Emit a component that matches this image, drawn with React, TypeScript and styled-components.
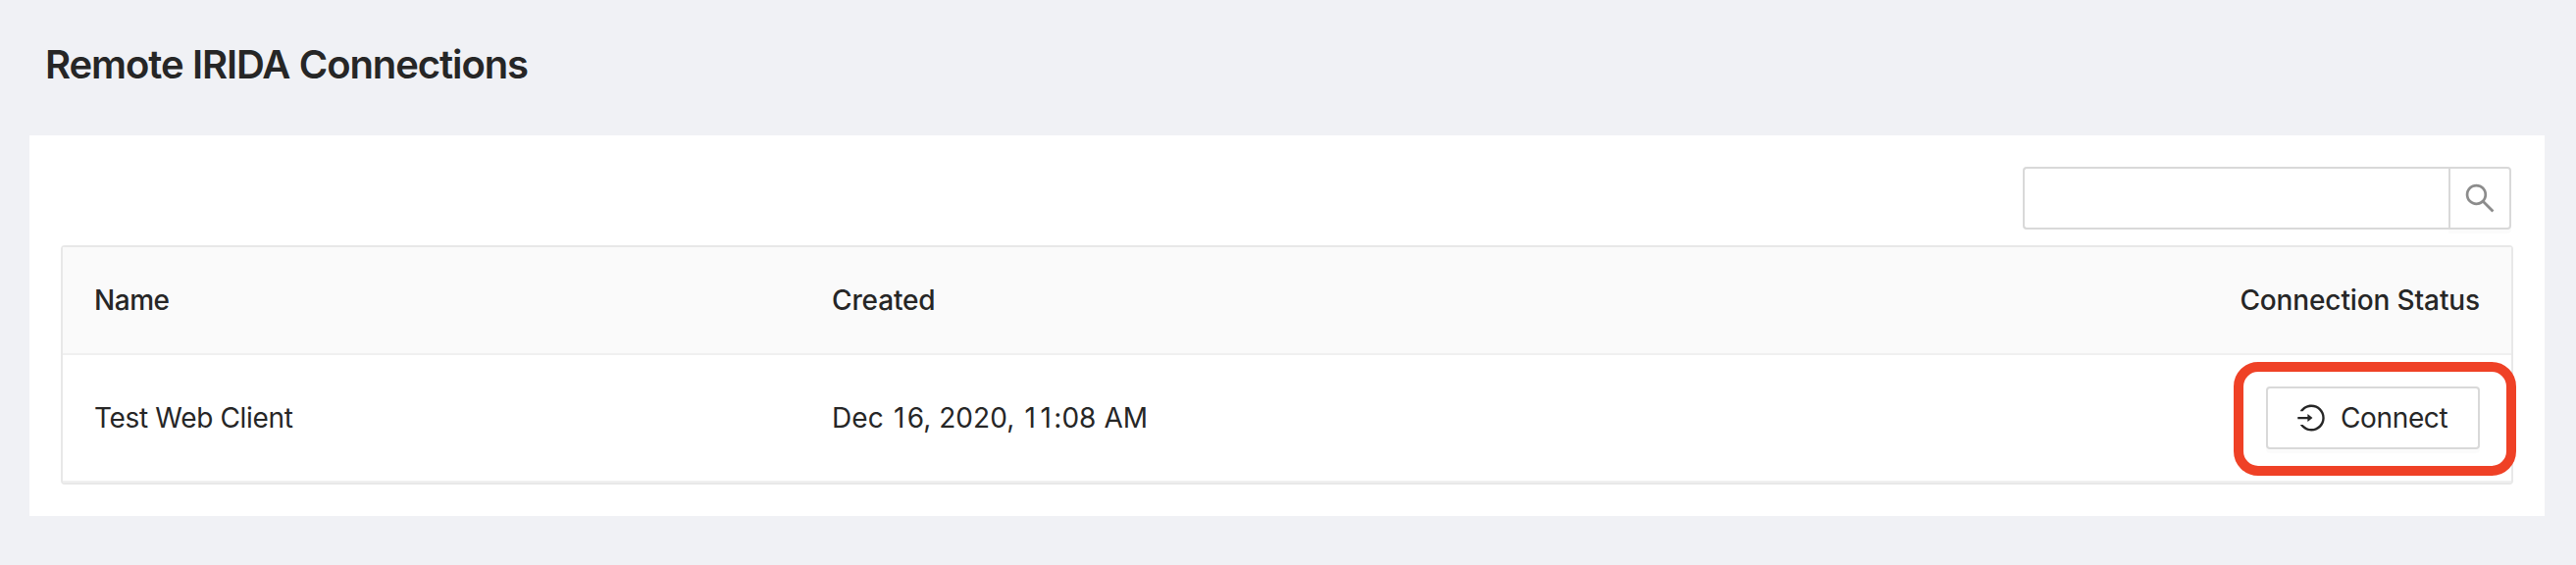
import React from 'react';
import { AiOutlineLogin, AiOutlineSearch } from 'react-icons/ai';
import styled, { createGlobalStyle } from 'styled-components';

const GlobalStyle = createGlobalStyle`
  *, *::before, *::after {
    box-sizing: border-box;
  }

  body {
    margin: 0;
    min-height: 100vh;
    background: #f0f1f5;
    color: #262626;
    font-family: Inter, 'Liberation Sans', sans-serif;
    font-size: 28px;
    line-height: 34px;
  }
`;

const Page = styled.main`
  display: flex;
  flex-direction: column;
  padding: 41px 32px 50px 30px;
`;

const PageTitle = styled.h1`
  margin: 0 0 48px 16px;
  font-size: 40px;
  font-weight: 600;
  line-height: 49px;
  letter-spacing: -1.08px;
  word-spacing: 0.5px;
`;

const Card = styled.section`
  display: flex;
  flex-direction: column;
  gap: 16px;
  padding: 32px;
  background: #fff;
`;

const Toolbar = styled.div`
  display: flex;
  justify-content: flex-end;
  padding-right: 2px;
`;

const SearchInput = styled.input`
  width: 434px;
  height: 64px;
  padding: 0 22px;
  border: 2px solid #d9d9d9;
  border-right: 0;
  border-radius: 4px 0 0 4px;
  outline: none;
  background: #fff;
  color: inherit;
  font: inherit;
`;

const SearchButton = styled.button`
  display: flex;
  align-items: center;
  justify-content: center;
  width: 64px;
  height: 64px;
  padding: 0;
  border: 2px solid #d9d9d9;
  border-radius: 0 4px 4px 0;
  background: #fff;
  box-shadow: 0 4px 0 rgba(0, 0, 0, 0.016);
  color: #8c8c8c;
`;

const Table = styled.div`
  display: flex;
  flex-direction: column;
  border: 2px solid #e8e8e8;
  border-radius: 4px;
`;

const Row = styled.div<{ $header?: boolean }>`
  display: grid;
  grid-template-columns: 752px 1fr 400px;
  align-items: center;
  height: ${({ $header }) => ($header ? '110px' : '130px')};
  border-bottom: 2px solid #f0f0f0;
  background: ${({ $header }) => ($header ? '#fafafa' : '#fff')};
  font-weight: ${({ $header }) => ($header ? 500 : 400)};
`;

const Cell = styled.div<{ $end?: boolean; $tracking?: number }>`
  display: flex;
  justify-content: ${({ $end }) => ($end ? 'flex-end' : 'flex-start')};
  padding: 0 32px;
  letter-spacing: ${({ $tracking = 0 }) => $tracking}px;
`;

/* Widens the narrow "1" so that every digit takes the same room. */
const WideOne = styled.span`
  padding: 0 2.3px;
`;

const Highlight = styled.div`
  position: relative;

  &::after {
    content: '';
    position: absolute;
    inset: -25px -37px -27px -33px;
    border: 10px solid #ef4126;
    border-radius: 25px;
    pointer-events: none;
  }
`;

const ConnectButton = styled.button`
  display: flex;
  align-items: center;
  gap: 16px;
  width: 218px;
  height: 64px;
  padding: 0 0 0 30px;
  border: 2px solid #d9d9d9;
  border-radius: 4px;
  background: #fff;
  box-shadow: 0 4px 0 rgba(0, 0, 0, 0.016);
  color: inherit;
  font: inherit;
  letter-spacing: -0.36px;
  white-space: nowrap;
`;

const ICON_VIEW_BOX = '64 64 896 896';

function DateText({ value }: { value: string }) {
  return (
    <time>
      {value.split(/(1)/).map((part, i) =>
        part === '1' ? <WideOne key={i}>1</WideOne> : part,
      )}
    </time>
  );
}

export default function App() {
  return (
    <>
      <GlobalStyle />
      <Page>
        <PageTitle>Remote IRIDA Connections</PageTitle>
        <Card>
          <Toolbar>
            <SearchInput type="text" aria-label="Search" />
            <SearchButton type="button" aria-label="Search">
              <AiOutlineSearch size={32} viewBox={ICON_VIEW_BOX} />
            </SearchButton>
          </Toolbar>
          <Table role="table">
            <Row $header role="row">
              <Cell role="columnheader" $tracking={-0.45}>Name</Cell>
              <Cell role="columnheader" $tracking={-0.14}>Created</Cell>
              <Cell role="columnheader" $end $tracking={-0.12}>Connection Status</Cell>
            </Row>
            <Row role="row">
              <Cell role="cell" $tracking={-0.34}>Test Web Client</Cell>
              <Cell role="cell" $tracking={0.05}>
                <DateText value="Dec 16, 2020, 11:08 AM" />
              </Cell>
              <Cell role="cell" $end>
                <Highlight>
                  <ConnectButton type="button">
                    <AiOutlineLogin size={28} viewBox={ICON_VIEW_BOX} />
                    Connect
                  </ConnectButton>
                </Highlight>
              </Cell>
            </Row>
          </Table>
        </Card>
      </Page>
    </>
  );
}
